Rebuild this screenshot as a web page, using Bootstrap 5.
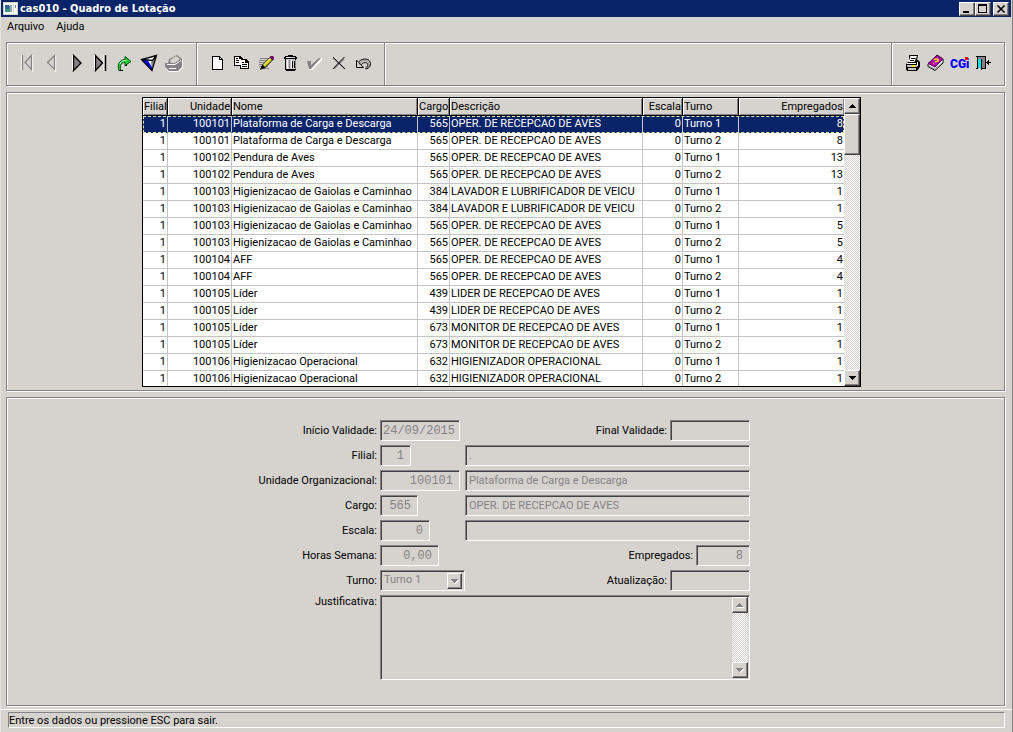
<!DOCTYPE html>
<html lang="pt-BR">
<head>
<meta charset="utf-8">
<meta name="viewport" content="width=device-width, initial-scale=1">
<title>cas010 - Quadro de Lotação</title>
<link href="https://cdn.jsdelivr.net/npm/bootstrap@5.3.0/dist/css/bootstrap.min.css" rel="stylesheet">
<style>
:root{--face:#d6d3ce;--shade:#848284;--dark:#424142;--navy:#0a246a}
body{font:11px/16px Roboto,"Liberation Sans",Arial,sans-serif;color:#000;background:var(--face);min-height:100vh;border-right:1px solid var(--shade);border-left:1px solid #e4e2de}
button{padding:0;border:0;background:var(--face);color:#000;font:inherit}
.titlebar{background:var(--navy);color:#fff;height:17px;margin-right:1px;padding:0 2px}
.titlebar h1{font:bold 11px/16px "DejaVu Sans Condensed","Noto Sans",sans-serif;margin:0 0 0 1px}
.win{width:16px;height:14px}
.win-close{margin-left:2px}
.raised{border:1px solid;border-color:#fff var(--dark) var(--dark) #fff;box-shadow:inset -1px -1px 0 var(--shade);background:var(--face);display:flex;align-items:center;justify-content:center}
.menubar{line-height:20px;padding:0 6px;gap:12px;height:25px}
.menubar a{color:#000;text-decoration:none}
.etched{border:1px solid var(--shade);box-shadow:1px 1px 0 #fff,inset 1px 1px 0 #fff}
.panels{padding:0 7px 0 5px;gap:6px}
.toolbar{height:44px}
.tools{width:190px;padding:0 8px 2px;border-right:1px solid var(--shade);box-shadow:1px 0 0 #fff}
.tools>div{width:170px}
.tools+.tools{width:188px}
.tools-end{border-left:1px solid var(--shade);box-shadow:inset 1px 0 0 #fff;padding:0 9px 2px 7px}
.tool{width:24px;height:24px;background:none;display:block}
.tool svg{display:block;width:24px;height:24px}
.gridpanel{padding:4px 8px 3px 0}
.datagrid{width:100%;max-width:719px;border:1px solid #000;background:#fff}
.datagrid table{table-layout:fixed;width:100%;border-collapse:separate;border-spacing:0}
.datagrid th,.datagrid td{height:17px;padding:0 1px;line-height:16px;white-space:nowrap;overflow:hidden;font-weight:400;border-right:1px solid #c6c3c6;border-bottom:1px solid #c6c3c6}
.datagrid th{height:18px;line-height:17px;background:var(--face);border-right-color:#000;border-bottom-color:#000;box-shadow:inset 1px 1px 0 #fff,inset -1px -1px 0 var(--shade)}
.datagrid th:last-child,.datagrid td:last-child{border-right:0}
.datagrid tbody tr:last-child td{border-bottom:0;height:15px;line-height:15px}
.datagrid .current td{background:var(--navy);color:#fff;border-bottom-color:var(--navy)}
.datagrid .current{outline:1px dashed #dee3a5;outline-offset:-1px}
.c-filial{width:25px}.c-unidade{width:64px}.c-cargo{width:32px}.c-descricao{width:193px}.c-escala{width:40px}.c-turno{width:56px}.c-empregados{width:105px}
.scrolltrack{width:16px;background:repeating-conic-gradient(#fff 0 25%,var(--face) 0 50%) 0 0/2px 2px}
.scrolltrack button{width:16px;height:16px}
.scrolltrack .thumb{width:16px;height:41px}
.formpanel{padding:22px 3px 24px 0}
.entry{width:492px;max-width:100%;gap:4px}
.entry label{line-height:22px;height:21px;text-align:right;white-space:nowrap;margin-right:3px}
.entry .memo-label{line-height:14px}
.lead-label{width:119px}
.slot{width:85px}
.sunk{height:21px;border:1px solid;border-color:var(--shade) #fff #fff var(--shade);box-shadow:inset 1px 1px 0 var(--dark);background:var(--face);color:var(--shade);border-radius:0;font:11px/16px Roboto,"Liberation Sans",Arial,sans-serif;padding:0 2px 1px 3px;opacity:1;margin:0;min-width:0;display:block}
.mono{font:12px/16px "Liberation Mono",monospace;padding:0 6px 0 2px}
.datefield{padding-right:2px}
.w30{width:31px}.w38{width:38px}.w50{width:50px}.w54{width:54px}.w58{width:59px}.w80{width:80px}
.combo{width:85px}
.combo select{appearance:none;width:100%}
.combo .drop{right:3px;top:3px;width:15px;height:16px;pointer-events:none}
.memo{height:85px}
.memo textarea{resize:none;height:85px;width:100%;overflow:hidden}
.memo .scrolltrack{right:2px;top:2px;bottom:2px}
.statusline{border-top:1px solid #fff;padding:2px 7px 4px;margin-top:3px}
.statusline div{border:1px solid;border-color:var(--shade) #fff #fff var(--shade);height:16px;line-height:15px}
</style>
</head>
<body class="d-flex flex-column">
<header class="titlebar d-flex align-items-center">
  <svg width="16" height="14" viewBox="0 0 16 14" shape-rendering="crispEdges" aria-hidden="true"><path fill="#d6d3ce" d="M0 0h15v13H0z"/><path fill="#fff" d="M1 1h13v11H1z"/><path fill="#3b9b8b" d="M2 4h7v6H2z"/><path fill="#31659c" d="M2 3h4v4H2z"/><path fill="#8fa9b8" d="M7 3h2v7H7z"/><path fill="#6b86b5" d="M12 3h1v3h-1z"/><path fill="#d6d3ce" d="M10 2h1v9h-1z"/></svg>
  <h1>cas010 - Quadro de Lotação</h1>
  <div class="d-flex ms-auto">
    <button class="win raised" aria-label="Minimizar"><svg width="12" height="10" shape-rendering="crispEdges"><path d="M2 7h6v2H2z"/></svg></button>
    <button class="win raised" aria-label="Maximizar"><svg width="12" height="10" shape-rendering="crispEdges"><path fill-rule="evenodd" d="M1 0h9v9H1zM2 2v6h7V2z"/></svg></button>
    <button class="win win-close raised" aria-label="Fechar"><svg width="12" height="10"><path d="M2.500 1.500l7 7M9.500 1.500l-7 7" stroke="#000" stroke-width="1.700"/></svg></button>
  </div>
</header>
<nav class="menubar d-flex"><a href="#">Arquivo</a><a href="#">Ajuda</a></nav>

<main class="panels d-flex flex-column flex-grow-1">
  <section class="toolbar etched d-flex">
    <div class="tools d-flex align-items-center"><div class="d-flex justify-content-between">
      <button class="tool" aria-label="Primeiro" disabled><svg viewBox="0 0 24 24"><path fill="none" stroke="#fff" stroke-width="1.300" d="M6.500 4v15M17.500 4v16L10.500 12.500"/><path fill="none" stroke="#848284" stroke-width="1.300" d="M7.500 4v15M16.500 4.500v14L10 11.500z"/></svg></button>
      <button class="tool" aria-label="Anterior" disabled><svg viewBox="0 0 24 24"><path fill="none" stroke="#fff" stroke-width="1.300" d="M16.500 4v16L9 12.500"/><path fill="none" stroke="#848284" stroke-width="1.300" d="M15.500 4.500v14L8.500 11.500z"/></svg></button>
      <button class="tool" aria-label="Próximo"><svg viewBox="0 0 24 24"><path fill="#848284" stroke="#000" stroke-width="1.400" d="M9.500 4.500v15L17 12z"/><path stroke="#fff" d="M8.500 4v15"/></svg></button>
      <button class="tool" aria-label="Último"><svg viewBox="0 0 24 24"><path fill="#848284" stroke="#000" stroke-width="1.400" d="M7.500 4.500v15L14.500 12z"/><path stroke="#fff" d="M6.500 4v15M16 4v15"/><path stroke="#000" stroke-width="1.500" d="M17.500 4v16"/></svg></button>
      <button class="tool" aria-label="Ir para"><svg viewBox="0 0 24 24"><path fill="#21d33a" stroke="#004b08" d="M7 19.500C5 14 7 9 13 8.500V5.500l6 5-6 4v-3c-4 0-6 3-4 8z"/><path fill="none" stroke="#baffba" d="M8 13c1-3 3-3.500 6-3.500"/><path d="M7 19h4v1H7zM13 14h2v1h-2z"/></svg></button>
      <button class="tool" aria-label="Filtrar"><svg viewBox="0 0 24 24"><path fill="#fff" d="M5 8l15-4-4 16z"/><path fill="#0000d8" d="M5 8l5 1 5 7v4z"/><path fill="#848284" d="M19 5l-4 13-1-7z"/><path fill="none" stroke="#000" stroke-width="1.300" d="M19.500 4.500L4.500 8.500 15 19.500zM4.500 8.500l11 1 4-5"/><path stroke="#00f" d="M10 9l4 7"/></svg></button>
      <button class="tool" aria-label="Imprimir ficha" disabled><svg viewBox="0 0 24 24"><path fill="#fff" d="M5 14l4-6 7-3 6 4v8l-5 4H8l-4-4z"/><path fill="#848284" d="M4 12h3l1-4 8-4 5 4v8l-4 4H8l-4-4z"/><path fill="#d6d3ce" d="M9 9l6-4 4 3-5 4h-4z"/><path fill="none" stroke="#fff" d="M6 13.500h8l6-4M8 17.500h7"/></svg></button>
    </div></div>
    <div class="tools d-flex align-items-center"><div class="d-flex justify-content-between">
      <button class="tool" aria-label="Novo"><svg viewBox="0 0 24 24" shape-rendering="crispEdges"><path d="M7 5h8v1h1v1h1v1h1v11H7z"/><path fill="#fff" d="M8 6h6v3h3v9H8z"/><path fill="#fff" d="M15 7h1v1h-1z"/></svg></button>
      <button class="tool" aria-label="Copiar"><svg viewBox="0 0 24 24" shape-rendering="crispEdges"><path d="M5 5h6l3 3v7H5zM11 8h6l3 3v7h-9z"/><path fill="#fff" d="M6 6h4v2h2v6H6zM12 9h4v3h3v5h-7z"/><path d="M7 7h2v1H7zM7 9h3v1H7zM7 11h3v1H7zM13 11h2v1h-2zM13 13h5v1h-5zM13 15h5v1h-5z"/></svg></button>
      <button class="tool" aria-label="Editar"><svg viewBox="0 0 24 24"><path shape-rendering="crispEdges" stroke="#848284" d="M6 7.500h9M5 9.500h9M5 11.500h11M5 13.500h10M5 15.500h9M6 17.500h9"/><path d="M6 19l2-5 9-9 3 3-9 9z"/><path fill="#ded300" d="M9 14l7-7 2 2-7 7z"/><path stroke="#ffff9c" d="M9.500 14l7-7"/><path fill="#84007b" d="M17 5h2l1 1v2l-1 1-3-3z"/></svg></button>
      <button class="tool" aria-label="Excluir"><svg viewBox="0 0 24 24" shape-rendering="crispEdges"><path d="M10 4h5v1h3v1h1v2h-1v11h-1v1H8v-1H7V8H6V6h1V5h3z"/><path fill="#c6c3c6" d="M8 6h9v1H8zM8 8h9v10H8z"/><path fill="#fff" d="M9 9h1v9H9zM8 6h4v1H8zM13 9h1v8h-1z"/><path fill="#848284" d="M11 9h1v8h-1zM17 9h1v9h-1z"/><path d="M14 10h1v7h-1zM16 10h1v7h-1z"/></svg></button>
      <button class="tool" aria-label="Confirmar" disabled><svg viewBox="0 0 24 24"><path fill="#fff" d="M6 12l4 1 9-6h1v2L10 19H7z"/><path fill="#848284" d="M5 10h4v4l8-7h2L9 18H7z"/></svg></button>
      <button class="tool" aria-label="Cancelar"><svg viewBox="0 0 24 24"><path fill="none" stroke="#848284" stroke-width="1.300" d="M6 7l12 11M17 8L7 18"/><path fill="none" stroke="#000" d="M6 6l6 6 6 6M17.500 6l-7 7-4.500 5"/></svg></button>
      <button class="tool" aria-label="Desfazer"><svg viewBox="0 0 24 24"><path fill="none" stroke="#848284" d="M8 14c3-7 11-5 10 1l-2 2"/><path fill="none" stroke="#000" d="M5.500 9v7.500h7L6 9.500M8 10.500c4-4 11-3 11.500 2 0 3-1 4-4 5.500l-1-1c3-2 3-5 0-5.500-2 0-3 1-4 2"/><path fill="#d6d3ce" d="M6 11l4 5H6z"/></svg></button>
    </div></div>
    <div class="tools-end ms-auto d-flex align-items-center">
      <button class="tool" aria-label="Imprimir"><svg viewBox="0 0 24 24"><path d="M10 4h9l-1 5h1l2 2v5l-3 4H8l-1-2v-5l3-3z"/><path fill="#fff" d="M11.500 5H18l-2.500 6h-6z"/><path fill="none" stroke="#000" d="M12 7.500h4.500M11 9.500h4"/><path fill="#fff" d="M8 12h9v1H8z"/><path fill="#c6c3c6" d="M8 14h10v2H8zM9 17h8v2H9z"/><path fill="#fff" d="M18 11h1v4h-1z"/><path fill="#ffeb00" d="M13 14h3v2h-3z"/></svg></button>
      <button class="tool" aria-label="Ajuda"><svg viewBox="0 0 24 24"><path fill="#fff" stroke="#000" d="M5 13l9-9 6 4v4l-8 7.500-7-4z"/><path fill="#b600b6" stroke="#520052" d="M5 12.500l9-8 6 3.500-8 8z"/><path fill="none" stroke="#848284" d="M6 15.500l6 2.500 8-7"/><path fill="none" stroke="#ffe700" stroke-width="1.500" d="M11 9c2-2 5-1 4 1l-3 1M10 12.500h1"/></svg></button>
      <button class="tool" aria-label="CGI"><svg viewBox="0 0 24 24"><text x="3" y="17" fill="#00f" font-family="Roboto,Liberation Sans,sans-serif" font-weight="900" font-size="12">CGi</text><path fill="#f00" d="M18 6h3v3h-3z"/></svg></button>
      <button class="tool" aria-label="Sair"><svg viewBox="0 0 24 24" shape-rendering="crispEdges"><path fill="#848284" d="M7 5h7v12H7z"/><path fill="none" stroke="#000" d="M5 5.500h9.500V17M5 17.500h2M6.500 5v12M11 17.500h4"/><path fill="#00e7e7" d="M7 8h3v10l-3-2z"/><path fill="none" stroke="#000" d="M10.500 8v11"/><path d="M15 11h5v1h-5zM16 10h1v3h-1zM17 9h1v5h-1z"/></svg></button>
    </div>
  </section>

  <section class="gridpanel etched d-flex justify-content-center">
    <div class="datagrid d-flex">
      <div class="flex-grow-1">
      <table>
        <colgroup><col class="c-filial"><col class="c-unidade"><col><col class="c-cargo"><col class="c-descricao"><col class="c-escala"><col class="c-turno"><col class="c-empregados"></colgroup>
        <thead><tr><th>Filial</th><th class="text-end">Unidade</th><th>Nome</th><th>Cargo</th><th>Descrição</th><th class="text-end">Escala</th><th>Turno</th><th class="text-end">Empregados</th></tr></thead>
        <tbody>
        <tr class="current"><td class="text-end">1</td><td class="text-end">100101</td><td>Plataforma de Carga e Descarga</td><td class="text-end">565</td><td>OPER. DE RECEPCAO DE AVES</td><td class="text-end">0</td><td>Turno 1</td><td class="text-end">8</td></tr>
        <tr><td class="text-end">1</td><td class="text-end">100101</td><td>Plataforma de Carga e Descarga</td><td class="text-end">565</td><td>OPER. DE RECEPCAO DE AVES</td><td class="text-end">0</td><td>Turno 2</td><td class="text-end">8</td></tr>
        <tr><td class="text-end">1</td><td class="text-end">100102</td><td>Pendura de Aves</td><td class="text-end">565</td><td>OPER. DE RECEPCAO DE AVES</td><td class="text-end">0</td><td>Turno 1</td><td class="text-end">13</td></tr>
        <tr><td class="text-end">1</td><td class="text-end">100102</td><td>Pendura de Aves</td><td class="text-end">565</td><td>OPER. DE RECEPCAO DE AVES</td><td class="text-end">0</td><td>Turno 2</td><td class="text-end">13</td></tr>
        <tr><td class="text-end">1</td><td class="text-end">100103</td><td>Higienizacao de Gaiolas e Caminhao</td><td class="text-end">384</td><td>LAVADOR E LUBRIFICADOR DE VEICU</td><td class="text-end">0</td><td>Turno 1</td><td class="text-end">1</td></tr>
        <tr><td class="text-end">1</td><td class="text-end">100103</td><td>Higienizacao de Gaiolas e Caminhao</td><td class="text-end">384</td><td>LAVADOR E LUBRIFICADOR DE VEICU</td><td class="text-end">0</td><td>Turno 2</td><td class="text-end">1</td></tr>
        <tr><td class="text-end">1</td><td class="text-end">100103</td><td>Higienizacao de Gaiolas e Caminhao</td><td class="text-end">565</td><td>OPER. DE RECEPCAO DE AVES</td><td class="text-end">0</td><td>Turno 1</td><td class="text-end">5</td></tr>
        <tr><td class="text-end">1</td><td class="text-end">100103</td><td>Higienizacao de Gaiolas e Caminhao</td><td class="text-end">565</td><td>OPER. DE RECEPCAO DE AVES</td><td class="text-end">0</td><td>Turno 2</td><td class="text-end">5</td></tr>
        <tr><td class="text-end">1</td><td class="text-end">100104</td><td>AFF</td><td class="text-end">565</td><td>OPER. DE RECEPCAO DE AVES</td><td class="text-end">0</td><td>Turno 1</td><td class="text-end">4</td></tr>
        <tr><td class="text-end">1</td><td class="text-end">100104</td><td>AFF</td><td class="text-end">565</td><td>OPER. DE RECEPCAO DE AVES</td><td class="text-end">0</td><td>Turno 2</td><td class="text-end">4</td></tr>
        <tr><td class="text-end">1</td><td class="text-end">100105</td><td>Líder</td><td class="text-end">439</td><td>LIDER DE RECEPCAO DE AVES</td><td class="text-end">0</td><td>Turno 1</td><td class="text-end">1</td></tr>
        <tr><td class="text-end">1</td><td class="text-end">100105</td><td>Líder</td><td class="text-end">439</td><td>LIDER DE RECEPCAO DE AVES</td><td class="text-end">0</td><td>Turno 2</td><td class="text-end">1</td></tr>
        <tr><td class="text-end">1</td><td class="text-end">100105</td><td>Líder</td><td class="text-end">673</td><td>MONITOR DE RECEPCAO DE AVES</td><td class="text-end">0</td><td>Turno 1</td><td class="text-end">1</td></tr>
        <tr><td class="text-end">1</td><td class="text-end">100105</td><td>Líder</td><td class="text-end">673</td><td>MONITOR DE RECEPCAO DE AVES</td><td class="text-end">0</td><td>Turno 2</td><td class="text-end">1</td></tr>
        <tr><td class="text-end">1</td><td class="text-end">100106</td><td>Higienizacao Operacional</td><td class="text-end">632</td><td>HIGIENIZADOR OPERACIONAL</td><td class="text-end">0</td><td>Turno 1</td><td class="text-end">1</td></tr>
        <tr><td class="text-end">1</td><td class="text-end">100106</td><td>Higienizacao Operacional</td><td class="text-end">632</td><td>HIGIENIZADOR OPERACIONAL</td><td class="text-end">0</td><td>Turno 2</td><td class="text-end">1</td></tr>
        </tbody>
      </table>
      </div>
      <div class="scrolltrack d-flex flex-column flex-shrink-0">
        <button class="raised" aria-label="Rolar para cima"><svg width="7" height="4" shape-rendering="crispEdges"><path d="M3 0h1v1h1v1h1v1h1v1H0V3h1V2h1V1h1z"/></svg></button>
        <div class="raised thumb"></div>
        <button class="raised mt-auto" aria-label="Rolar para baixo"><svg width="7" height="4" shape-rendering="crispEdges"><path d="M0 0h7v1H6v1H5v1H4v1H3V3H2V2H1V1H0z"/></svg></button>
      </div>
    </div>
  </section>

  <section class="formpanel etched d-flex justify-content-center flex-grow-1">
    <form class="entry d-flex flex-column">
      <div class="d-flex">
        <label class="lead-label" for="inicio">Início Validade:</label>
        <div class="slot"><input id="inicio" class="sunk mono datefield w80" value="24/09/2015" disabled></div>
        <div class="d-flex flex-grow-1 justify-content-end"><label for="final">Final Validade:</label><input id="final" class="sunk w80" disabled></div>
      </div>
      <div class="d-flex">
        <label class="lead-label" for="filial">Filial:</label>
        <div class="slot"><input id="filial" class="sunk mono text-end w30" value="1" disabled></div>
        <input class="sunk flex-grow-1" value="." aria-label="Nome da filial" disabled>
      </div>
      <div class="d-flex">
        <label class="lead-label" for="unidade">Unidade Organizacional:</label>
        <div class="slot"><input id="unidade" class="sunk mono text-end w80" value="100101" disabled></div>
        <input class="sunk flex-grow-1" value="Plataforma de Carga e Descarga" aria-label="Nome da unidade" disabled>
      </div>
      <div class="d-flex">
        <label class="lead-label" for="cargo">Cargo:</label>
        <div class="slot"><input id="cargo" class="sunk mono text-end w38" value="565" disabled></div>
        <input class="sunk flex-grow-1" value="OPER. DE RECEPCAO DE AVES" aria-label="Descrição do cargo" disabled>
      </div>
      <div class="d-flex">
        <label class="lead-label" for="escala">Escala:</label>
        <div class="slot"><input id="escala" class="sunk mono text-end w50" value="0" disabled></div>
        <input class="sunk flex-grow-1" aria-label="Descrição da escala" disabled>
      </div>
      <div class="d-flex">
        <label class="lead-label" for="horas">Horas Semana:</label>
        <div class="slot"><input id="horas" class="sunk mono text-end w58" value="0,00" disabled></div>
        <div class="d-flex flex-grow-1 justify-content-end"><label for="empregados">Empregados:</label><input id="empregados" class="sunk mono text-end w54" value="8" disabled></div>
      </div>
      <div class="d-flex">
        <label class="lead-label" for="turno">Turno:</label>
        <div class="combo position-relative">
          <select id="turno" class="sunk" disabled><option>Turno 1</option></select>
          <span class="drop raised position-absolute"><svg width="8" height="5" shape-rendering="crispEdges"><path fill="#fff" d="M1 1h7v1H7v1H6v1H5v1H4V4H3z"/><path fill="#848284" d="M0 0h7v1H6v1H5v1H4v1H3V3H2V2H1V1H0z"/></svg></span>
        </div>
        <div class="d-flex flex-grow-1 justify-content-end"><label for="atualizacao">Atualização:</label><input id="atualizacao" class="sunk w80" disabled></div>
      </div>
      <div class="d-flex">
        <label class="lead-label memo-label" for="justificativa">Justificativa:</label>
        <div class="memo position-relative flex-grow-1">
          <textarea id="justificativa" class="sunk" disabled></textarea>
          <div class="scrolltrack position-absolute d-flex flex-column justify-content-between">
            <button type="button" class="raised" aria-label="Subir" disabled><svg width="8" height="5" shape-rendering="crispEdges"><path fill="#fff" d="M1 4h7v1H1z"/><path fill="#848284" d="M3 0h1v1h1v1h1v1h1v1H0V3h1V2h1V1h1z"/></svg></button>
            <button type="button" class="raised" aria-label="Descer" disabled><svg width="8" height="5" shape-rendering="crispEdges"><path fill="#fff" d="M1 1h7v1H7v1H6v1H5v1H4V4H3z"/><path fill="#848284" d="M0 0h7v1H6v1H5v1H4v1H3V3H2V2H1V1H0z"/></svg></button>
          </div>
        </div>
      </div>
    </form>
  </section>
</main>
<footer class="statusline"><div>Entre os dados ou pressione ESC para sair.</div></footer>
<script src="https://cdn.jsdelivr.net/npm/bootstrap@5.3.0/dist/js/bootstrap.bundle.min.js"></script>
</body>
</html>
